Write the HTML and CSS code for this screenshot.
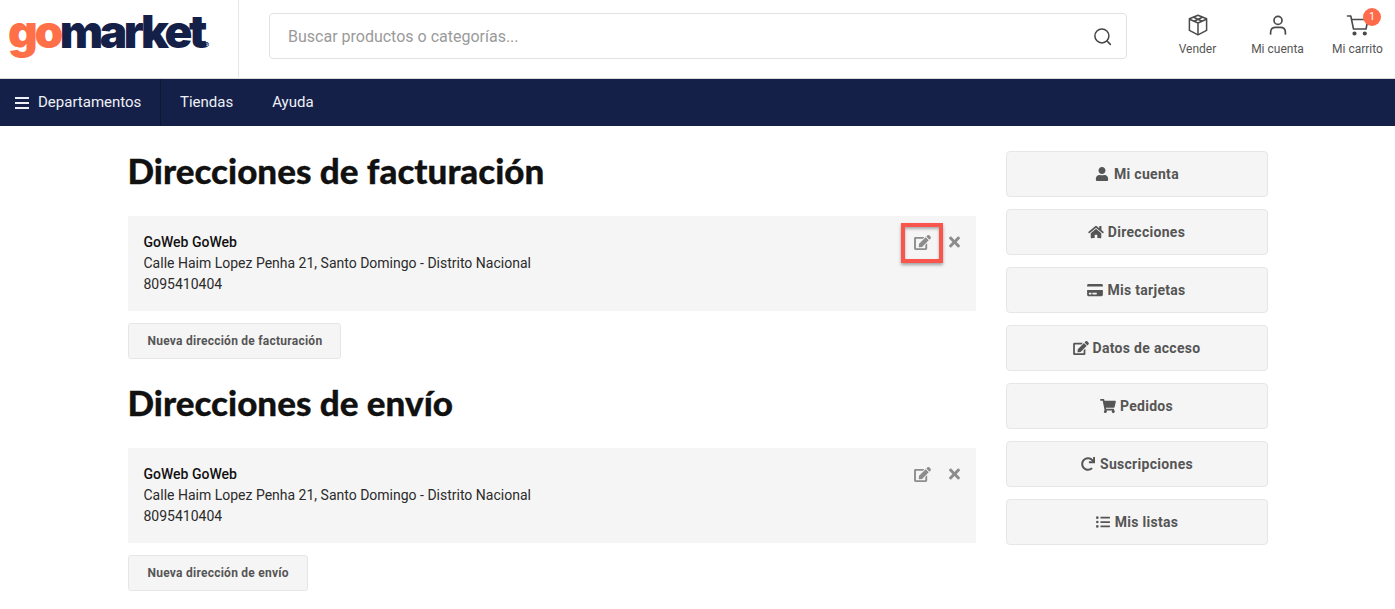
FILE: index.html
```html
<!DOCTYPE html>
<html lang="es">
<head>
    <meta charset="UTF-8">
    <title>Direcciones - gomarket</title>
    <link rel="stylesheet" href="styles.css">
</head>
<body>
    <svg class="sprite" xmlns="http://www.w3.org/2000/svg">
        <symbol id="i-edit" viewBox="0 0 576 512"><path d="M402.6 83.2l90.2 90.2c3.8 3.8 3.8 10 0 13.8L274.4 405.6l-92.8 10.3c-12.4 1.4-22.9-9.1-21.5-21.5l10.3-92.8L388.8 83.2c3.8-3.8 10-3.8 13.8 0zm162-22.9l-48.8-48.8c-15.2-15.2-39.9-15.2-55.2 0l-35.4 35.4c-3.8 3.8-3.8 10 0 13.8l90.2 90.2c3.8 3.8 10 3.8 13.8 0l35.4-35.4c15.2-15.3 15.2-40 0-55.2zM384 346.2V448H64V128h229.8c3.2 0 6.2-1.3 8.5-3.5l40-40c7.6-7.6 2.2-20.5-8.5-20.5H48C21.5 64 0 85.5 0 112v352c0 26.5 21.5 48 48 48h352c26.5 0 48-21.5 48-48V306.2c0-10.7-12.9-16-20.5-8.5l-40 40c-2.2 2.3-3.5 5.3-3.5 8.5z"/></symbol>
        <symbol id="i-times" viewBox="0 0 352 512"><path d="M242.72 256l100.07-100.07c12.28-12.28 12.28-32.19 0-44.48l-22.24-22.24c-12.28-12.28-32.19-12.28-44.48 0L176 189.28 75.93 89.21c-12.28-12.28-32.19-12.28-44.48 0L9.21 111.45c-12.28 12.28-12.28 32.19 0 44.48L109.28 256 9.21 356.07c-12.28 12.28-12.28 32.19 0 44.48l22.24 22.24c12.28 12.28 32.2 12.28 44.48 0L176 322.72l100.07 100.07c12.28 12.28 32.2 12.28 44.48 0l22.24-22.24c12.28-12.28 12.28-32.19 0-44.48L242.72 256z"/></symbol>
    </svg>

    <header class="topbar">
        <div class="logo-cell">
            <a class="logo" href="#"><span class="logo-go">go</span><span class="logo-market">market</span><span class="logo-reg">®</span></a>
        </div>
        <div class="search-cell">
            <div class="search">
                <input class="search-input" type="text" placeholder="Buscar productos o categorías...">
                <svg class="search-icon" viewBox="0 0 24 24" fill="none" stroke="#444" stroke-width="1.7" stroke-linecap="round"><circle cx="11.3" cy="11.3" r="8"/><path d="M17.300 17.300l3.700 3.700"/></svg>
            </div>
        </div>
        <nav class="user-links">
            <a class="user-link" href="#">
                <svg viewBox="0 0 24 24" fill="none" stroke="#4a4a4a" stroke-width="1.5" stroke-linejoin="round"><path d="M12 2.2l8.600 3.600v11.600L12 21.800l-8.600-4.400V5.800z"/><path d="M3.600 6.200L12 10l8.400-3.800M12 10v11.600M7.600 4.200l8.600 4M16.400 4.200l-8.400 4"/></svg>
                <span>Vender</span>
            </a>
            <a class="user-link" href="#">
                <svg viewBox="0 0 24 24" fill="none" stroke="#4a4a4a" stroke-width="1.7" stroke-linecap="round"><circle cx="12" cy="7.400" r="4"/><path d="M4.600 21v-1.600c0-3.200 2.200-5 5-5h4.800c2.800 0 5 1.800 5 5V21"/></svg>
                <span>Mi cuenta</span>
            </a>
            <a class="user-link" href="#">
                <svg viewBox="0 0 24 24" fill="none" stroke="#4a4a4a" stroke-width="1.6" stroke-linecap="round" stroke-linejoin="round"><path d="M1.500 3h3.300l2.700 13h12.500l2-9.500H5.600"/><circle cx="8.500" cy="20.500" r="1.300" fill="#4a4a4a"/><circle cx="18.800" cy="20.500" r="1.300" fill="#4a4a4a"/></svg>
                <span>Mi carrito</span>
                <b class="cart-badge">1</b>
            </a>
        </nav>
    </header>

    <nav class="mainnav">
        <a class="dept" href="#">
            <span class="burger"><i></i><i></i><i></i></span>
            Departamentos
        </a>
        <a class="nav-link" href="#">Tiendas</a>
        <a class="nav-link" href="#">Ayuda</a>
    </nav>

    <main class="page">
        <section class="addresses">
            <h1>Direcciones de facturación</h1>
            <div class="address">
                <div class="address-text">
                    <strong>GoWeb GoWeb</strong>
                    <div>Calle Haim Lopez Penha 21, Santo Domingo - Distrito Nacional</div>
                    <div>8095410404</div>
                </div>
                <div class="address-actions">
                    <a class="action-edit highlighted" href="#"><svg><use href="#i-edit"/></svg></a>
                    <a class="action-del" href="#"><svg><use href="#i-times"/></svg></a>
                </div>
            </div>
            <a class="btn" href="#">Nueva dirección de facturación</a>

            <h1>Direcciones de envío</h1>
            <div class="address">
                <div class="address-text">
                    <strong>GoWeb GoWeb</strong>
                    <div>Calle Haim Lopez Penha 21, Santo Domingo - Distrito Nacional</div>
                    <div>8095410404</div>
                </div>
                <div class="address-actions">
                    <a class="action-edit" href="#"><svg><use href="#i-edit"/></svg></a>
                    <a class="action-del" href="#"><svg><use href="#i-times"/></svg></a>
                </div>
            </div>
            <a class="btn" href="#">Nueva dirección de envío</a>
        </section>

        <aside class="side">
            <a class="side-btn" href="#"><svg viewBox="0 0 448 512"><path d="M224 256c70.7 0 128-57.3 128-128S294.7 0 224 0 96 57.3 96 128s57.3 128 128 128zm89.6 32h-16.7c-22.2 10.2-46.9 16-72.9 16s-50.6-5.8-72.9-16h-16.7C60.2 288 0 348.2 0 422.4V464c0 26.5 21.5 48 48 48h352c26.5 0 48-21.5 48-48v-41.6c0-74.2-60.2-134.400-134.400-134.400z"/></svg>Mi cuenta</a>
            <a class="side-btn" href="#"><svg viewBox="0 0 576 512"><path d="M280.37 148.26L96 300.11V464a16 16 0 0 0 16 16l112.06-.29a16 16 0 0 0 15.92-16V368a16 16 0 0 1 16-16h64a16 16 0 0 1 16 16v95.64a16 16 0 0 0 16 16.05L464 480a16 16 0 0 0 16-16V300L295.67 148.26a12.19 12.19 0 0 0-15.3 0zM571.6 251.47L488 182.56V44.05a12 12 0 0 0-12-12h-56a12 12 0 0 0-12 12v72.61L318.47 43a48 48 0 0 0-61 0L4.34 251.47a12 12 0 0 0-1.6 16.9l25.5 31A12 12 0 0 0 45.15 301l235.22-193.74a12.19 12.19 0 0 1 15.3 0L530.9 301a12 12 0 0 0 16.9-1.6l25.5-31a12 12 0 0 0-1.7-16.93z"/></svg>Direcciones</a>
            <a class="side-btn" href="#"><svg viewBox="0 0 576 512"><path d="M0 432c0 26.5 21.5 48 48 48h480c26.5 0 48-21.5 48-48V256H0v176zm192-68c0-6.6 5.400-12 12-12h136c6.600 0 12 5.400 12 12v40c0 6.600-5.400 12-12 12H204c-6.600 0-12-5.400-12-12v-40zm-128 0c0-6.600 5.400-12 12-12h72c6.600 0 12 5.400 12 12v40c0 6.600-5.400 12-12 12H76c-6.600 0-12-5.400-12-12v-40zM576 80v48H0V80c0-26.500 21.500-48 48-48h480c26.500 0 48 21.500 48 48z"/></svg>Mis tarjetas</a>
            <a class="side-btn" href="#"><svg><use href="#i-edit"/></svg>Datos de acceso</a>
            <a class="side-btn" href="#"><svg viewBox="0 0 576 512"><path d="M528.12 301.319l47.273-208C578.806 78.301 567.391 64 551.99 64H159.208l-9.166-44.81C147.758 8.021 137.93 0 126.529 0H24C10.745 0 0 10.745 0 24v16c0 13.255 10.745 24 24 24h69.883l70.248 343.435C147.325 417.1 136 435.222 136 456c0 30.928 25.072 56 56 56s56-25.072 56-56c0-15.674-6.447-29.835-16.824-40h209.647C430.447 426.165 424 440.326 424 456c0 30.928 25.072 56 56 56s56-25.072 56-56c0-22.172-12.888-41.332-31.579-50.405l5.517-24.276c3.413-15.018-8.002-29.319-23.403-29.319H218.117l-6.545-32h293.145c11.206 0 20.92-7.754 23.403-18.681z"/></svg>Pedidos</a>
            <a class="side-btn" href="#"><svg viewBox="0 0 512 512"><path d="M500.33 0h-47.41a12 12 0 0 0-12 12.57l4 82.76A247.42 247.42 0 0 0 256 8C119.34 8 7.900 119.53 8 256.19 8.100 393.07 119.1 504 256 504a247.1 247.1 0 0 0 166.18-63.91 12 12 0 0 0 .48-17.43l-34-34a12 12 0 0 0-16.38-.55A176 176 0 1 1 402.1 157.8l-101.53-4.87a12 12 0 0 0-12.57 12v47.41a12 12 0 0 0 12 12h200.33a12 12 0 0 0 12-12V12a12 12 0 0 0-12-12z"/></svg>Suscripciones</a>
            <a class="side-btn" href="#"><svg viewBox="0 0 512 512"><path d="M48 48a48 48 0 1 0 48 48 48 48 0 0 0-48-48zm0 160a48 48 0 1 0 48 48 48 48 0 0 0-48-48zm0 160a48 48 0 1 0 48 48 48 48 0 0 0-48-48zm448 16H176a16 16 0 0 0-16 16v32a16 16 0 0 0 16 16h320a16 16 0 0 0 16-16v-32a16 16 0 0 0-16-16zm0-320H176a16 16 0 0 0-16 16v32a16 16 0 0 0 16 16h320a16 16 0 0 0 16-16V80a16 16 0 0 0-16-16zm0 160H176a16 16 0 0 0-16 16v32a16 16 0 0 0 16 16h320a16 16 0 0 0 16-16v-32a16 16 0 0 0-16-16z"/></svg>Mis listas</a>
        </aside>
    </main>
</body>
</html>
```

FILE: styles.css
```css
body {
    margin: 0;
    font-family: 'Roboto', sans-serif;
    color: #222;
    background-color: #fff;
}
a {
    text-decoration: none;
    color: inherit;
}
.sprite {
    display: none;
}

/* top bar */
.topbar {
    display: flex;
    height: 79px;
}
.logo-cell {
    width: 239px;
    box-sizing: border-box;
    padding-left: 8px;
    border-right: 1px solid #e6e6e6;
}
.logo {
    display: block;
    font-family: 'Inter', sans-serif;
    font-weight: 900;
    font-size: 46px;
    letter-spacing: -3.4px;
    line-height: 62px;
    white-space: nowrap;
}
.logo-go {
    color: #ff7048;
}
.logo-market {
    color: #152049;
}
.logo-reg {
    font-size: 8px;
    letter-spacing: 0;
    color: #152049;
}
.search-cell {
    flex: 1;
    padding: 13px 0 0 30px;
}
.search {
    display: flex;
    align-items: center;
    width: 858px;
    height: 46px;
    box-sizing: border-box;
    border: 1px solid #e2e2e2;
    border-radius: 4px;
    padding: 0 13px 0 18px;
}
.search-input {
    flex: 1;
    border: none;
    outline: none;
    padding: 0;
    font-family: 'Roboto', sans-serif;
    font-size: 16px;
}
.search-input::placeholder {
    color: #9a9a9a;
}
.search-icon {
    width: 21px;
    height: 21px;
}
.user-links {
    display: flex;
    justify-content: flex-end;
    gap: 5px;
    width: 268px;
}
.user-link {
    position: relative;
    display: flex;
    flex-direction: column;
    align-items: center;
    width: 75px;
    padding-top: 13px;
    font-size: 12px;
    color: #555;
}
.user-link svg {
    width: 24px;
    height: 24px;
    margin-bottom: 5px;
}
.cart-badge {
    position: absolute;
    top: 8px;
    left: 43px;
    width: 18px;
    height: 18px;
    border-radius: 50%;
    background-color: #ff6b4a;
    color: #fff;
    font-size: 10px;
    font-weight: 400;
    line-height: 18px;
    text-align: center;
}

/* navy nav */
.mainnav {
    display: flex;
    height: 47px;
    align-items: stretch;
    background-color: #152049;
    color: #eef0f5;
    font-size: 15px;
    line-height: 47px;
    border-top: 1px solid #d8d8d8;
    margin-top: -1px;
}
.dept {
    display: flex;
    align-items: center;
    gap: 9px;
    width: 161px;
    box-sizing: border-box;
    padding-left: 15px;
    border-right: 1px solid #0e1736;
}
.burger {
    display: flex;
    flex-direction: column;
    justify-content: space-between;
    width: 14px;
    height: 12px;
}
.burger i {
    display: block;
    height: 2px;
    background-color: #eef0f5;
}
.nav-link {
    margin-left: 19px;
    margin-right: 20px;
}

/* content */
.page {
    display: flex;
    align-items: flex-start;
    gap: 30px;
    width: 1140px;
    margin: 0 auto;
}
.addresses {
    width: 848px;
}
h1 {
    margin: 0;
    font-family: 'Lato', sans-serif;
    font-weight: 900;
    font-size: 35px;
    line-height: 46px;
    color: #111;
    -webkit-text-stroke: 0.3px #111;
    padding: 21px 0 23px;
}
.btn + h1 {
    padding-top: 20px;
    padding-bottom: 23px;
}
.address {
    display: flex;
    justify-content: space-between;
    height: 95px;
    box-sizing: border-box;
    padding: 16px 16px 0 16px;
    background-color: #f5f5f5;
    font-size: 14px;
    line-height: 21px;
    color: #2b2b2b;
}
.address-text strong {
    font-weight: 500;
    color: #111;
}
.address-actions {
    display: flex;
    align-items: flex-start;
}
.action-edit,
.action-del {
    display: flex;
    align-items: center;
    justify-content: center;
    height: 22px;
    fill: #8c8c8c;
}
.action-edit {
    width: 16px;
    margin-right: 18px;
    margin-top: -1px;
}
.action-edit svg {
    width: 17px;
    height: 15px;
    flex: none;
}
.action-del {
    width: 11px;
    margin-top: -1px;
}
.action-del svg {
    width: 11px;
    height: 16px;
}
.highlighted {
    position: relative;
}
.highlighted::after {
    content: "";
    position: absolute;
    left: -14px;
    top: -8px;
    width: 42px;
    height: 40px;
    box-sizing: border-box;
    border: 4px solid #f9554d;
    box-shadow: 0 2px 3px rgba(0, 0, 0, 0.35), inset 0 2px 3px rgba(0, 0, 0, 0.3);
}
.btn {
    display: inline-block;
    margin-top: 12px;
    padding: 0 18px 0 19px;
    height: 36px;
    line-height: 34px;
    box-sizing: border-box;
    border: 1px solid #e6e6e6;
    border-radius: 3px;
    background-color: #f5f5f5;
    color: #555;
    font-size: 12px;
    font-weight: 700;
    letter-spacing: 0.25px;
}

/* sidebar */
.side {
    display: flex;
    flex-direction: column;
    gap: 12px;
    width: 262px;
    padding-top: 25px;
}
.side-btn {
    display: flex;
    align-items: center;
    justify-content: center;
    gap: 4px;
    height: 46px;
    box-sizing: border-box;
    border: 1px solid #e6e6e6;
    border-radius: 4px;
    background-color: #f5f5f5;
    color: #555;
    font-size: 14px;
    font-weight: 700;
    letter-spacing: 0.3px;
}
.side-btn svg {
    width: 16px;
    height: 14px;
    fill: #555;
}
```
